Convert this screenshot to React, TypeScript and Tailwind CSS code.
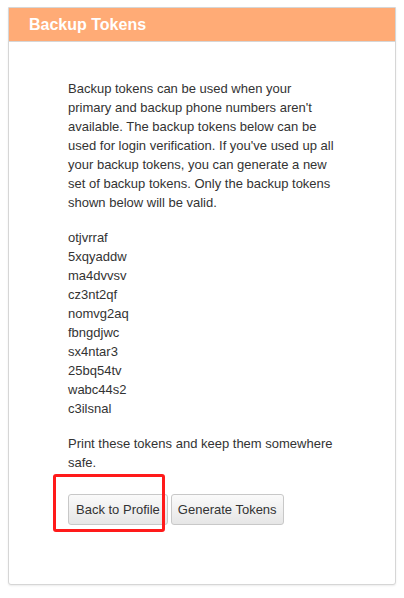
const tokens = [
  "otjvrraf",
  "5xqyaddw",
  "ma4dvvsv",
  "cz3nt2qf",
  "nomvg2aq",
  "fbngdjwc",
  "sx4ntar3",
  "25bq54tv",
  "wabc44s2",
  "c3ilsnal",
];

const introLines = [
  "Backup tokens can be used when your",
  "primary and backup phone numbers aren't",
  "available. The backup tokens below can be",
  "used for login verification. If you've used up all",
  "your backup tokens, you can generate a new",
  "set of backup tokens. Only the backup tokens",
  "shown below will be valid.",
];

const App = () => {
  return (
    <div className="min-h-[598px] bg-white pt-[7px] px-2 font-['Liberation_Sans',Arial,sans-serif]">
      {/* Panel */}
      <div className="w-[388px] border border-[#d6d6d6] rounded-b-[3px] shadow-[0_1px_2px_rgba(0,0,0,0.08)] bg-white">
        <div className="h-[34px] bg-[#ffab76] border-b border-[#d6d6d6] pl-5 flex items-center">
          <h3 className="text-white font-bold text-[16px] leading-none">Backup Tokens</h3>
        </div>

        <div className="pl-[59px] pt-[37px] pb-[59px] text-[13px] leading-[19px] text-[#333]">
          <div className="w-[280px] whitespace-nowrap">
            <p className="mb-4">
              {introLines.map((l, i) => (
                <span key={i} className="block">{l}</span>
              ))}
            </p>

            <ul className="mb-4">
              {tokens.map((t) => (
                <li key={t}>{t}</li>
              ))}
            </ul>

            <p>
              <span className="block">Print these tokens and keep them somewhere</span>
              <span className="block">safe.</span>
            </p>

            {/* Buttons */}
            <div className="relative mt-[22px] flex gap-[3px]">
              <button className="h-[31px] px-[7px] text-[13px] text-[#333] border border-[#c8c8c8] rounded-[3px] bg-gradient-to-b from-[#fafafa] to-[#e6e6e6]">
                Back to Profile
              </button>
              <button className="h-[31px] px-[6px] text-[13px] text-[#333] border border-[#c8c8c8] rounded-[3px] bg-gradient-to-b from-[#fafafa] to-[#e6e6e6]">
                Generate Tokens
              </button>
              {/* highlight annotation */}
              <div className="absolute left-[-15px] top-[-20px] w-[112px] h-[58px] border-[3px] border-[#ff1a1a] rounded-[3px] pointer-events-none" />
            </div>
          </div>
        </div>
      </div>
    </div>
  );
};

export default App;
